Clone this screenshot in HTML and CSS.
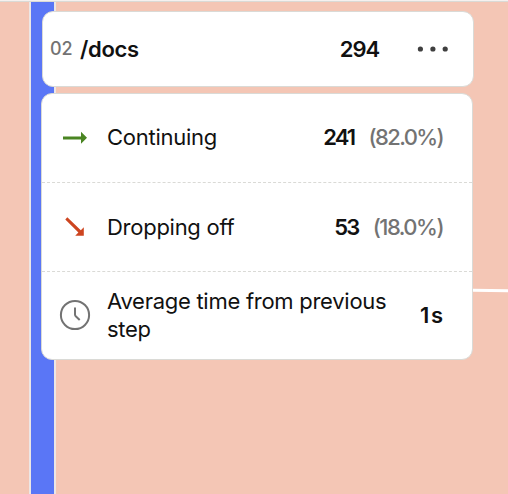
FILE: index.html
```html
<!DOCTYPE html>
<html lang="en">
<head>
<meta charset="utf-8">
<title>Path step</title>
<link rel="stylesheet" href="styles.css">
</head>
<body>
<main class="canvas">
  <div class="node-bar"></div>
  <div class="link-edge"></div>
  <div class="stack">
    <header class="card head">
      <span class="index">02</span>
      <span class="name">/docs</span>
      <span class="total">294</span>
      <svg class="more" width="32" height="8" viewBox="0 0 32 8" fill="#3f3f3f"><circle cx="3.4" cy="4" r="2.6"/><circle cx="15.9" cy="4" r="2.6"/><circle cx="28.2" cy="4" r="2.6"/></svg>
    </header>
    <section class="card details">
      <div class="row first">
        <svg class="icon" width="32" height="32" viewBox="0 0 32 32"><path d="M4 15.4H22V10.8L28 16.8L22 22.8V18.4H4Z" fill="#4a8522"/></svg>
        <span class="label">Continuing</span>
        <span class="value">241</span><span class="percent">(82.0%)</span>
      </div>
      <div class="row">
        <svg class="icon" width="32" height="32" viewBox="0 0 32 32"><path d="M8.3 6.2L21.8 19.2L24.8 16.2V24.8H16.2L19.4 21.6L6.3 8.4Z" fill="#cd4520"/></svg>
        <span class="label">Dropping off</span>
        <span class="value">53</span><span class="percent narrow">(18.0%)</span>
      </div>
      <div class="row last">
        <svg class="icon" width="32" height="32" viewBox="0 0 32 32" fill="none" stroke="#737373" stroke-width="2"><circle cx="16" cy="16" r="14.1"/><path d="M16 8.6V15.4Q16 16.6 17 17.5L20.7 21"/></svg>
        <span class="label">Average time from previous step</span>
        <span class="value duration">1s</span>
      </div>
    </section>
  </div>
</main>
</body>
</html>
```

FILE: styles.css
```css
* { box-sizing: border-box; }
body { margin: 0; font-family: Inter, "Liberation Sans", sans-serif; color: #111; }
.canvas {
  position: relative;
  width: 508px;
  height: 494px;
  overflow: hidden;
  background: linear-gradient(#f5f1ef 0 1px, #dadad6 1px 2px, #f4c6b5 2px);
}
.node-bar {
  position: absolute;
  left: 29px;
  top: 2px;
  width: 27px;
  height: 492px;
  background: #5a76f6;
  border: solid #ece6e5;
  border-width: 0 2px;
}
.link-edge {
  position: absolute;
  left: 473px;
  top: 289px;
  width: 35px;
  height: 3px;
  background: #fff;
  transform: skewY(0.6deg);
}
.stack {
  position: relative;
  display: flex;
  flex-direction: column;
  gap: 6px;
  padding: 11px 34px 0 41px;
}
.card {
  background: #fff;
  border: 1px solid #dadad6;
  border-radius: 11px;
}
.head {
  display: flex;
  align-items: center;
  width: 432px;
  height: 76px;
  margin-left: 1px;
  padding: 0 24px 0 7px;
}
.index { width: 30px; padding-bottom: 1px; font-size: 18px; font-weight: 500; letter-spacing: 0; color: #737373; }
.name { flex: 1; font-size: 22px; font-weight: 600; letter-spacing: -0.3px; }
.total { font-size: 22px; font-weight: 600; letter-spacing: -1.1px; }
.more { margin-left: 38px; }
.details { width: 432px; height: 267px; }
.row {
  display: flex;
  align-items: center;
  height: 89px;
  padding: 0 29px 0 17px;
  border-bottom: 1px dashed #dadad6;
}
.first { padding-bottom: 2px; }
.last { height: 87px; padding-bottom: 2px; border-bottom: 0; }
.icon { flex: none; margin-right: 16px; }
.label { flex: 1; font-size: 22px; line-height: 28px; letter-spacing: -0.27px; }
.value { font-size: 22px; font-weight: 600; letter-spacing: -2px; }
.duration { margin-right: -2px; letter-spacing: 1.8px; }
.percent { margin-left: 14.5px; font-size: 22px; font-weight: 500; color: #737373; letter-spacing: -1.6px; }
.narrow { letter-spacing: -1.5px; }
```
